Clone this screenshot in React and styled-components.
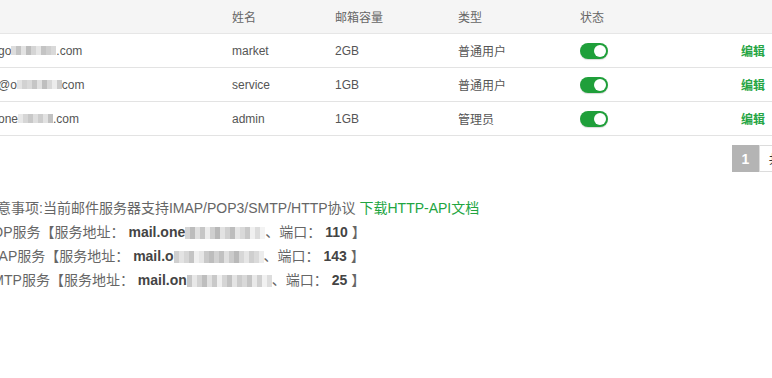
import React from "react";
import styled, { createGlobalStyle } from "styled-components";

const GlobalStyle = createGlobalStyle`
  html, body { margin: 0; padding: 0; background: #fff; overflow: hidden; }
  body {
    font-family: "Liberation Sans", Arial, "Noto Sans CJK SC", sans-serif;
    color: #555;
  }
`;

const Page = styled.div`
  width: 830px;
  margin-left: -17px;
`;

const GridRow = styled.div`
  display: grid;
  grid-template-columns: 249px 103px 123px 122px 60px 1fr;
  height: 33px;
  border-bottom: 1px solid ${(p) => (p.$head ? "#e6e6e6" : "#e3e3e3")};
  background: ${(p) => (p.$head ? "#f5f5f5" : "#fff")};
`;

const Cell = styled.div`
  display: flex;
  align-items: center;
  font-size: 12px;
  color: ${(p) => (p.$head ? "#666" : "#555")};
  white-space: nowrap;
  overflow: hidden;
`;

const EmailCell = styled(Cell)`
  padding-left: 15px;
`;

const ActionCell = styled(Cell)`
  justify-content: flex-end;
  padding-right: 48px;
`;

const EditLink = styled.a`
  color: #26a544;
  font-weight: bold;
  font-size: 12px;
  text-decoration: none;
`;

const Toggle = styled.span`
  display: inline-flex;
  align-items: center;
  justify-content: flex-end;
  width: 28px;
  height: 16px;
  padding: 0 2px;
  box-sizing: border-box;
  border-radius: 8px;
  background: #1f9f3a;
  box-shadow: 0 1px 1px rgba(0, 0, 0, 0.15);
`;

const Knob = styled.span`
  width: 12px;
  height: 12px;
  border-radius: 50%;
  background: #fff;
`;

const MosaicStrip = styled.span`
  display: inline-flex;
  align-items: center;
  height: ${(p) => p.$h}px;
  vertical-align: middle;
`;

const Block = styled.span`
  display: inline-block;
  width: ${(p) => p.$w}px;
  height: 100%;
  background: ${(p) => p.$c};
`;

const Mosaic = ({ shades, w = 5, h = 9 }) => (
  <MosaicStrip $h={h}>
    {shades.map((c, i) => (
      <Block key={i} $w={w} $c={c} />
    ))}
  </MosaicStrip>
);

const Pager = styled.div`
  display: flex;
  justify-content: flex-end;
  margin-top: 9px;
  padding-right: 4px;
`;

const PageBtn = styled.span`
  display: flex;
  align-items: center;
  justify-content: center;
  height: 27px;
  min-width: ${(p) => (p.$active ? "27px" : "50px")};
  box-sizing: border-box;
  font-size: ${(p) => (p.$active ? "14px" : "12px")};
  font-weight: ${(p) => (p.$active ? "bold" : "normal")};
  color: ${(p) => (p.$active ? "#fff" : "#333")};
  background: ${(p) => (p.$active ? "#b4b4b4" : "#fff")};
  border: ${(p) => (p.$active ? "none" : "1px solid #dcdcdc")};
`;

const Notes = styled.div`
  margin-top: 24px;
  font-size: 14px;
  line-height: 24px;
  color: #666;
`;

const NoteLine = styled.div`
  white-space: nowrap;
`;

const Strong = styled.b`
  color: #444;
  font-weight: bold;
`;

const GreenLink = styled.a`
  color: #22a53f;
  text-decoration: none;
`;

const users = [
  {
    pre: "go",
    blur: ["#ddd", "#c4c4c4", "#e3e3e3", "#bdbdbd", "#d5d5d5", "#e6e6e6", "#c4c4c4", "#cfcfcf", "#d9d9d9"],
    post: ".com",
    name: "market",
    size: "2GB",
    type: "普通用户",
  },
  {
    pre: "@o",
    blur: ["#e4e4e4", "#d2d2d2", "#dadada", "#c6c6c6", "#e1e1e1", "#bfbfbf", "#d8d8d8", "#ececec", "#cbcbcb"],
    post: "com",
    name: "service",
    size: "1GB",
    type: "普通用户",
  },
  {
    pre: "one",
    blur: ["#e8e8e8", "#d6d6d6", "#c8c8c8", "#dedede", "#cdcdcd", "#e2e2e2", "#c2c2c2"],
    post: ".com",
    name: "admin",
    size: "1GB",
    type: "管理员",
  },
];

const services = [
  {
    proto: "POP",
    host: "mail.one",
    blur: ["#d4d4d4", "#bcbcbc", "#e0e0e0", "#c6c6c6", "#ededed", "#cfcfcf", "#b8b8b8", "#e2e2e2", "#d0d0d0", "#bdbdbd", "#e6e6e6", "#d9d9d9", "#c8c8c8", "#f0f0f0", "#dcdcdc", "#f3f3f3"],
    port: "110",
  },
  {
    proto: "IMAP",
    host: "mail.o",
    blur: ["#cfcfcf", "#e3e3e3", "#d6d6d6", "#c4c4c4", "#f0f0f0", "#e6e6e6", "#c9c9c9", "#bdbdbd", "#d2d2d2", "#c1c1c1", "#e0e0e0", "#cbcbcb", "#b9b9b9", "#d7d7d7", "#e6e6e6", "#cfcfcf", "#dadada", "#ececec"],
    port: "143",
  },
  {
    proto: "SMTP",
    host: "mail.on",
    blur: ["#c7c7c7", "#e8e8e8", "#d3d3d3", "#bebebe", "#e1e1e1", "#c9c9c9", "#efefef", "#d5d5d5", "#c2c2c2", "#e4e4e4", "#cccccc", "#d9d9d9", "#c5c5c5", "#e9e9e9", "#d0d0d0", "#f1f1f1", "#dddddd"],
    port: "25",
  },
];

export default function App() {
  return (
    <>
      <GlobalStyle />
      <Page>
        <GridRow $head>
          <Cell $head />
          <Cell $head>姓名</Cell>
          <Cell $head>邮箱容量</Cell>
          <Cell $head>类型</Cell>
          <Cell $head>状态</Cell>
          <Cell $head />
        </GridRow>
        {users.map((u) => (
          <GridRow key={u.name}>
            <EmailCell>
              {u.pre}
              <Mosaic shades={u.blur} />
              {u.post}
            </EmailCell>
            <Cell>{u.name}</Cell>
            <Cell>{u.size}</Cell>
            <Cell>{u.type}</Cell>
            <Cell>
              <Toggle>
                <Knob />
              </Toggle>
            </Cell>
            <ActionCell>
              <EditLink href="#">编辑</EditLink>
            </ActionCell>
          </GridRow>
        ))}
        <Pager>
          <PageBtn $active>1</PageBtn>
          <PageBtn>共1条</PageBtn>
        </Pager>
        <Notes>
          <NoteLine>
            注意事项:当前邮件服务器支持IMAP/POP3/SMTP/HTTP协议{" "}
            <GreenLink href="#">下载HTTP-API文档</GreenLink>
          </NoteLine>
          {services.map((s) => (
            <NoteLine key={s.proto}>
              {s.proto}服务【服务地址： <Strong>{s.host}</Strong>
              <Mosaic shades={s.blur} w={5} h={12} />
              、端口： <Strong>{s.port}</Strong> 】
            </NoteLine>
          ))}
        </Notes>
      </Page>
    </>
  );
}
